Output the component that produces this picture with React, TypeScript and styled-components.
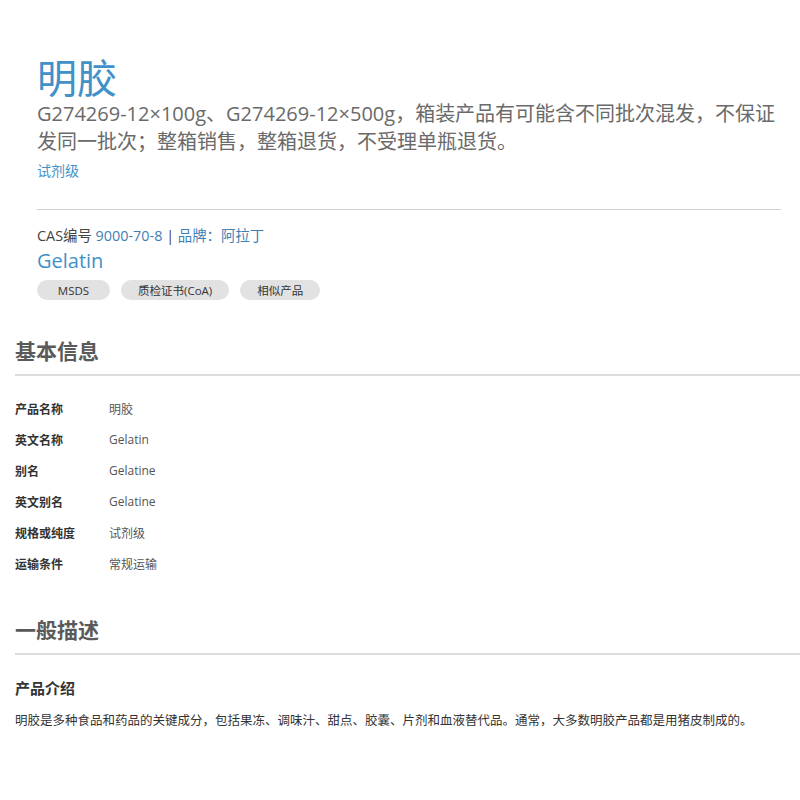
import styled, { createGlobalStyle } from 'styled-components';

const GlobalStyle = createGlobalStyle`
  body {
    margin: 0;
    background: #fff;
    font-family: 'Open Sans', 'Noto Sans CJK SC', sans-serif;
    color: #555;
  }
`;

const Page = styled.div`
  width: 800px;
  padding-top: 55px;
`;

const Header = styled.div`
  padding: 0 19px 0 37px;
`;

const Title = styled.h1`
  margin: 0;
  font-size: 40px;
  font-weight: 400;
  line-height: 45px;
  color: #3f91c8;
`;

const SubTitle = styled.p`
  margin: 0;
  font-size: 20px;
  line-height: 28px;
  color: #6a6a6a;
`;

const Grade = styled.div`
  margin-top: 4px;
  font-size: 14px;
  line-height: 22px;
  color: #3f91c8;
`;

const Divider = styled.hr`
  margin: 27px 0 14px;
  border: 0;
  border-top: 1px solid #cfcfcf;
`;

const CasLine = styled.div`
  font-size: 14.4px;
  line-height: 24px;
  color: #444;
`;

const Link = styled.span`
  color: #3f7fb3;
`;

const EnName = styled.div`
  font-size: 20px;
  line-height: 26px;
  color: #3f91c8;
`;

const Buttons = styled.div`
  display: flex;
  gap: 11px;
  margin-top: 6px;
`;

const Pill = styled.span`
  display: inline-flex;
  justify-content: center;
  align-items: center;
  min-width: 73px;
  height: 20px;
  padding: 0 17px;
  box-sizing: border-box;
  border-radius: 10px;
  background: #e2e2e2;
  font-size: 11.5px;
  color: #333;
`;

const Section = styled.section<{ $top: number }>`
  padding-left: 15px;
  margin-top: ${(p) => p.$top}px;
`;

const SectionTitle = styled.h2`
  margin: 0;
  font-size: 21px;
  font-weight: 700;
  line-height: 30px;
  color: #5a5a5a;
  padding-bottom: 8px;
  border-bottom: 2px solid #dcdcdc;
`;

const InfoTable = styled.div`
  padding: 17px 0 0;
`;

const Row = styled.div`
  display: flex;
  height: 31px;
  align-items: center;
  font-size: 12px;
`;

const Label = styled.span`
  width: 94px;
  font-weight: 700;
  color: #333;
`;

const Value = styled.span`
  color: #555;
`;

const SubHead = styled.h3`
  margin: 22px 0 0;
  font-size: 15px;
  font-weight: 700;
  line-height: 22px;
  color: #333;
`;

const Para = styled.p`
  margin: 13px 0 0;
  font-size: 12.5px;
  line-height: 18px;
  color: #333;
`;

const rows: [string, string][] = [
  ['产品名称', '明胶'],
  ['英文名称', 'Gelatin'],
  ['别名', 'Gelatine'],
  ['英文别名', 'Gelatine'],
  ['规格或纯度', '试剂级'],
  ['运输条件', '常规运输'],
];

export default function App() {
  return (
    <Page>
      <GlobalStyle />
      <Header>
        <Title>明胶</Title>
        <SubTitle>
          G274269-12×100g、G274269-12×500g，箱装产品有可能含不同批次混发，不保证发同一批次；整箱销售，整箱退货，不受理单瓶退货。
        </SubTitle>
        <Grade>试剂级</Grade>
        <Divider />
        <CasLine>
          CAS编号 <Link>9000-70-8</Link> | <Link>品牌：阿拉丁</Link>
        </CasLine>
        <EnName>Gelatin</EnName>
        <Buttons>
          <Pill>MSDS</Pill>
          <Pill>质检证书(CoA)</Pill>
          <Pill>相似产品</Pill>
        </Buttons>
      </Header>

      <Section $top={36}>
        <SectionTitle>基本信息</SectionTitle>
        <InfoTable>
          {rows.map(([k, v]) => (
            <Row key={k}>
              <Label>{k}</Label>
              <Value>{v}</Value>
            </Row>
          ))}
        </InfoTable>
      </Section>

      <Section $top={36}>
        <SectionTitle>一般描述</SectionTitle>
        <SubHead>产品介绍</SubHead>
        <Para>
          明胶是多种食品和药品的关键成分，包括果冻、调味汁、甜点、胶囊、片剂和血液替代品。通常，大多数明胶产品都是用猪皮制成的。
        </Para>
      </Section>
    </Page>
  );
}
